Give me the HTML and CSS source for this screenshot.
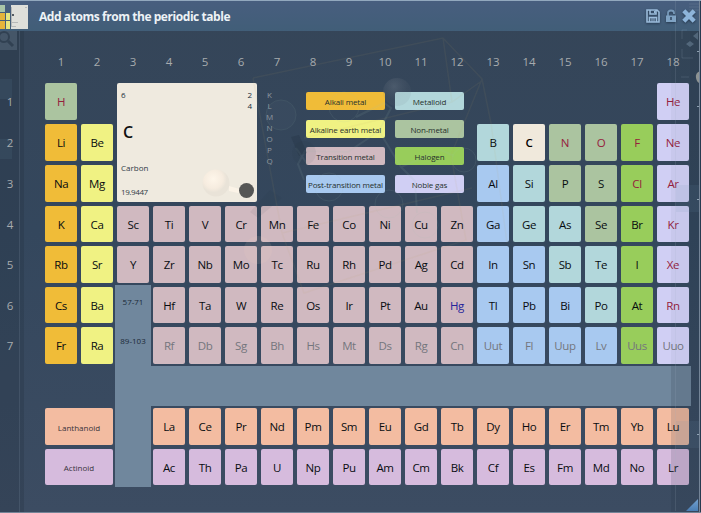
FILE: index.html
```html
<!DOCTYPE html>
<html lang="en">
<head>
<meta charset="utf-8">
<title>Add atoms from the periodic table</title>
<link rel="stylesheet" href="styles.css">
</head>
<body>
<main class="window">
  <header class="titlebar">
    <svg class="thumb" width="28" height="24" viewBox="0 0 28 24">
      <path fill="#a9c5a8" d="M0 0h5v7H0z"/><path fill="#e5b43b" d="M0 8h5v7H0zM0 16h5v8H0z"/>
      <path fill="#e6e67f" d="M6 8h4v7H6zM6 16h4v8H6z"/><path fill="#dedfda" d="M11 0h17v24H11z"/>
      <path stroke="#8c9296" stroke-opacity=".5" d="M11.500 2v20M12 17.500h6M12 21.500h4M25 2.500h2"/><path fill="#545b62" d="M12 9h2v2h-2z"/>
    </svg>
    <h1 class="title">Add atoms from the periodic table</h1>
    <div class="actions">
      <svg width="14" height="14" viewBox="0 0 14 14"><path fill="none" stroke="#9bbcdb" stroke-width="1.600" d="M1 1h10l2 2v10H1zM4 1v4h6V1M3.500 13V8.500h7V13"/><path fill="#9bbcdb" d="M8 2h1.500v2H8zM5 9.500h4v1H5zM5 11.500h4v1H5z"/></svg>
      <svg width="12" height="14" viewBox="0 0 12 14"><path fill="none" stroke="#7799b9" stroke-width="1.800" d="M3 7V4Q3 1.500 6 1.500T9 4v1"/><path fill="#7fa3c4" d="M1 6.500h10V13H1z"/><path fill="#435c78" d="M5 8h2v3H5z"/></svg>
      <svg width="14" height="14" viewBox="0 0 14 14"><path stroke="#8db4da" stroke-width="4.400" d="M1.800 1.800l10.400 10.400M12.200 1.800L1.800 12.200"/></svg>
    </div>
  </header>
  <section class="table" id="table">
    <div class="band band-column"></div>
    <div class="band band-row"></div>
    <div class="range range-la">57-71</div>
    <div class="range range-ac">89-103</div>
    <article class="detail">
      <div class="detail-top"><span>6</span><span class="shells">2<br>4</span></div>
      <div class="symbol">C</div>
      <div class="name">Carbon</div>
      <div class="mass">19.9447</div>
    </article>
    <div class="shell-names"><span>K</span><span>L</span><span>M</span><span>N</span><span>O</span><span>P</span><span>Q</span></div>
    <div class="legend">
      <span class="alkali">Alkali metal</span><span class="metalloid">Metalloid</span>
      <span class="earth">Alkaline earth metal</span><span class="nonmetal">Non-metal</span>
      <span class="transition">Transition metal</span><span class="halogen">Halogen</span>
      <span class="post">Post-transition metal</span><span class="noble">Noble gas</span>
    </div>
    <div class="series series-la lanthanoid">Lanthanoid</div>
    <div class="series series-ac actinoid">Actinoid</div>
  </section>
  <svg class="backdrop" width="701" height="513" viewBox="0 0 701 513">
    <defs>
      <radialGradient id="pearl" cx=".4" cy=".35"><stop offset="0" stop-color="#fef6ea"/><stop offset=".7" stop-color="#f6ecdf"/><stop offset="1" stop-color="#e9e3d8"/></radialGradient>
      <radialGradient id="bead" cx=".4" cy=".3"><stop offset="0" stop-color="#9da4ac" stop-opacity=".22"/><stop offset="1" stop-color="#6b7480" stop-opacity=".1"/></radialGradient>
      <linearGradient id="grip" x2="0" y2="1"><stop stop-color="#73a1d0"/><stop offset="1" stop-color="#4a7db3"/></linearGradient>
    </defs>
    <g fill="none" stroke="#c3a66c" stroke-width="1.500" opacity=".08">
      <path d="M253 78L443 38L482 79L451 155L466 240L304 293L282 233L253 78M443 38l9 64L304 138M452 102l31-22M482 79l9 44 16 120M282 233l190-45"/>
    </g>
    <g fill="none" stroke="#9fc0b2" opacity=".1">
      <circle cx="281" cy="115" r="15" fill="#789" fill-opacity=".6"/><circle cx="344" cy="107" r="15"/><circle cx="329" cy="187" r="14"/><circle cx="389" cy="204" r="14"/><circle cx="425" cy="225" r="13"/><circle cx="464" cy="160" r="12"/>
      <path stroke-width="2" d="M356 117l28-14 7 5-12 23 22 36 40-17 13 6M379 131l-31 21-43-1-7 13 6 16M296 148l12 17M401 167l14 14 2 32"/>
    </g>
    <g fill="#1d2937" opacity=".06"><circle cx="304" cy="153" r="12"/><path d="M270 190l12 8-24 20-8-6z"/></g>
    <path fill="#1d2937" opacity=".22" d="M291 137l8-2 8 18-8 3z"/>
    <circle cx="397" cy="92" r="14" fill="url(#bead)"/>
    <circle cx="216" cy="183" r="13.500" fill="url(#pearl)"/>
    <path d="M229 186l14 4v4l-14-3z" fill="#fbf3e7"/>
    <circle cx="246.500" cy="190.500" r="7.500" fill="#555655"/>
    <circle cx="258" cy="250" r="14" fill="#ffd6c8" opacity=".1"/>
    <path fill="#202b38" opacity=".23" d="M0 31h24v481H0z"/>
    <path stroke="#6c7d91" opacity=".28" d="M19.500 31v481"/>
    <path fill="#202b38" opacity=".04" d="M671 31h29v481h-29z"/>
    <path fill="#202b38" opacity=".1" d="M671 366h29v146h-29zM690 31h10v335h-10z"/>
    <path stroke="#a5b4c5" opacity=".15" d="M675.500 1v510"/>
    <path fill="#6e8fb1" opacity=".11" d="M0 79h12v20H0zM0 139h12v20H0zM676 185h24v27h-24zM676 421h24v27h-24z"/>
    <path fill="#6f8294" opacity=".35" d="M0 31h17v19H0z"/>
    <g stroke="#142232" fill="none" opacity=".4"><circle cx="4" cy="37" r="5" stroke-width="2"/><path stroke-width="3" d="M8 41l5 5"/></g>
    <g fill="none" stroke="#91a6bb" opacity=".2"><path d="M687 30h-5v9M682 49v9h11M689 4h11M689 7h11M689 10h11M681 77h8"/></g>
    <path fill="#8ea8c0" opacity=".35" d="M686 44l4-3 4 3-4 3zM693 36l5-4v8z"/>
    <path fill="#b7b7ae" opacity=".7" d="M700 71q-5 2-4 7t4 5z"/>
    <path stroke="#b7c9d9" d="M697 51.500h4M697 106.500h4M697 199.500h4M697 434.500h4" opacity=".7"/>
    <path stroke="#92a8be" d="M0 .5h701"/><path stroke="#748497" d="M0 512.500h701M699.500 1v511"/>
    <path fill="#283b50" d="M700 1h1v511h-1z"/>
    <path fill="url(#grip)" d="M698 499v12h-12z"/>
  </svg>
</main>
<script src="table.js"></script>
</body>
</html>
```
FILE: styles.css
```css
* { box-sizing: border-box; }
body { margin: 0; font-family: "Open Sans", "Noto Sans", sans-serif; }
.window {
  position: relative;
  width: 701px;
  height: 513px;
  overflow: hidden;
  background: linear-gradient(#354558, #34475d 45%, #3c4c62);
}
.titlebar {
  display: flex;
  align-items: center;
  height: 31px;
  padding: 2px 5px 0 0;
  background: linear-gradient(#485e7f, #415e78);
}
.title {
  margin: 0 auto 0 11px;
  color: #edf2f6;
  font-size: 12px;
  font-weight: 700;
  line-height: 18px;
  letter-spacing: -.44px;
  white-space: nowrap;
}
.thumb { margin-top: 0; }
.actions { display: flex; align-items: center; gap: 5px; margin-top: -2px; filter: drop-shadow(0 1px 1px #263a50); }
.table {
  display: grid;
  grid-template-columns: 21px repeat(18, 32px);
  grid-template-rows: 30px 37px 37px 37px 36px 37px 36px 37px 36px 37px 36px;
  column-gap: 4px;
  row-gap: 4px;
  padding: 18px 0 0 20px;
}
.cell, .label {
  display: flex;
  align-items: center;
  justify-content: center;
  font-size: 12px;
  line-height: 16px;
}
.cell { padding-top: 1px; border-radius: 2px; color: #080c10; font-size: 11.5px; letter-spacing: -.4px; }
.label { position: relative; z-index: 1; color: #a7abae; font-size: 11.5px; }
.period-label { margin-left: -20px; width: 20px; padding-top: 1px; }
.group-label { padding-bottom: 5px; }
.alkali { background: #f0bc38; }
.earth { background: #f0f283; }
.transition { background: #d0b9c0; }
.post { background: #a8c9f0; }
.metalloid { background: #b2d7db; }
.nonmetal { background: #abc4a0; }
.halogen { background: #98cd5b; }
.noble { background: #d0cff4; }
.lanthanoid { background: #f3bca1; }
.actinoid { background: #d6bbdd; }
.selected { background: #f0e9dc; }
.gas { color: #96203c; }
.liquid { color: #24249b; }
.synthetic { color: #74767d; }
.cell.selected { color: #000; font-weight: 600; }
.detail {
  grid-column: 4 / 8;
  grid-row: 2 / 5;
  padding: 6px 5px 0 4px;
  border-radius: 2px;
  background: #efeadf;
  color: #303b47;
  font-size: 8px;
  line-height: 11px;
}
.detail-top { display: flex; justify-content: space-between; color: #203040; }
.symbol { margin: 11px 0 0 2px; color: #101010; font-size: 16px; font-weight: 600; line-height: 20px; }
.name { margin-top: 20px; }
.mass { margin-top: 13px; letter-spacing: -.4px; }
.shell-names {
  grid-column: 8;
  grid-row: 2 / 5;
  display: flex;
  flex-direction: column;
  padding: 6px 0 0;
  width: 17px;
  text-align: center;
  color: #8f98a0;
  font-size: 8px;
  line-height: 11px;
}
.legend {
  grid-column: 9 / 14;
  grid-row: 2 / 5;
  display: grid;
  grid-template-columns: 79px 69px;
  grid-auto-rows: 18px;
  align-content: start;
  gap: 9.7px 10px;
  padding: 9px 0 0 9px;
  font-size: 8px;
  line-height: 18px;
  text-align: center;
  color: #262f2c;
}
.legend span { border-radius: 2px; white-space: nowrap; padding-top: 1px; letter-spacing: -.15px; }
.band { background: #70879d; }
.band-column { grid-column: 4; grid-row: 7 / 12; margin: -2px; }
.band-row { grid-column: 5 / 20; grid-row: 9; margin: -2px; }
.range { grid-column: 4; color: #1b2a38; font-size: 8px; line-height: 12px; text-align: center; white-space: nowrap; }
.range-la { grid-row: 7; padding-top: 9px; }
.range-ac { grid-row: 8; padding-top: 8px; }
.series {
  grid-column: 2 / 4;
  display: flex;
  align-items: center;
  justify-content: center;
  padding-top: 1px;
  border-radius: 2px;
  color: #38333a;
  font-size: 8px;
}
.series-la { grid-row: 10; }
.series-ac { grid-row: 11; }
.backdrop { position: absolute; inset: 0; pointer-events: none; }
```
FILE: table.js
```js
const table = document.getElementById("table");

function place(text, column, row, classes) {
  const cell = document.createElement("div");
  cell.className = classes;
  cell.textContent = text;
  cell.style.gridColumn = column;
  cell.style.gridRow = row;
  table.append(cell);
}

const periods = [
  { 1: "H", 18: "He" },
  { 1: "Li", 2: "Be", 13: "B", 14: "C", 15: "N", 16: "O", 17: "F", 18: "Ne" },
  { 1: "Na", 2: "Mg", 13: "Al", 14: "Si", 15: "P", 16: "S", 17: "Cl", 18: "Ar" },
  "K Ca Sc Ti V Cr Mn Fe Co Ni Cu Zn Ga Ge As Se Br Kr".split(" "),
  "Rb Sr Y Zr Nb Mo Tc Ru Rh Pd Ag Cd In Sn Sb Te I Xe".split(" "),
  "Cs Ba - Hf Ta W Re Os Ir Pt Au Hg Tl Pb Bi Po At Rn".split(" "),
  "Fr Ra - Rf Db Sg Bh Hs Mt Ds Rg Cn Uut Fl Uup Lv Uus Uuo".split(" ")
];
const metalloids = ["B", "Si", "Ge", "As", "Sb", "Te", "Po"];
const nonmetals = ["H", "N", "O", "P", "S", "Se"];
const gases = ["H", "He", "N", "O", "F", "Ne", "Cl", "Ar", "Kr", "Xe", "Rn"];

function family(symbol, group) {
  if (symbol === "C") return "selected";
  if (metalloids.includes(symbol)) return "metalloid";
  if (nonmetals.includes(symbol)) return "nonmetal";
  if (group === 1) return "alkali";
  if (group === 2) return "earth";
  if (group < 13) return "transition";
  if (group < 17) return "post";
  return group === 17 ? "halogen" : "noble";
}

for (let group = 1; group <= 18; group++) place(group, group + 1, 1, "label group-label");

periods.forEach((period, index) => {
  place(index + 1, 1, index + 2, "label period-label");
  for (let group = 1; group <= 18; group++) {
    const symbol = Array.isArray(period) ? period[group - 1] : period[group];
    if (!symbol || symbol === "-") continue;
    let state = gases.includes(symbol) ? " gas" : "";
    if (symbol === "Hg") state = " liquid";
    if (index === 6 && group > 3) state = " synthetic";
    place(symbol, group + 1, index + 2, "cell " + family(symbol, group) + state);
  }
});

"La Ce Pr Nd Pm Sm Eu Gd Tb Dy Ho Er Tm Yb Lu".split(" ").forEach((symbol, i) => place(symbol, i + 5, 10, "cell lanthanoid"));
"Ac Th Pa U Np Pu Am Cm Bk Cf Es Fm Md No Lr".split(" ").forEach((symbol, i) => place(symbol, i + 5, 11, "cell actinoid"));
```
